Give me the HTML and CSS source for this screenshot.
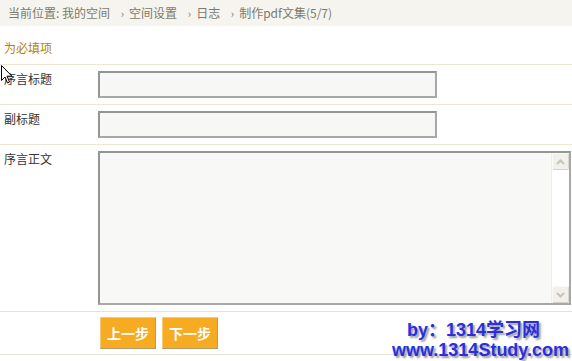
FILE: index.html
```html
<!DOCTYPE html>
<html lang="zh-CN">
<head>
    <meta charset="UTF-8">
    <title>制作pdf文集</title>
    <link rel="stylesheet" href="styles.css">
</head>
<body>
    <div class="breadcrumb">
        当前位置: <a href="#">我的空间</a>
        <span class="sep">›</span><a href="#">空间设置</a>
        <span class="sep">›</span><a href="#">日志</a>
        <span class="sep">›</span>制作pdf文集(5/7)
    </div>

    <p class="required">为必填项</p>

    <form class="pdf-form">
        <div class="row">
            <label for="title">序言标题</label>
            <input type="text" id="title" class="field">
        </div>
        <div class="row">
            <label for="subtitle">副标题</label>
            <input type="text" id="subtitle" class="field">
        </div>
        <div class="row">
            <label for="body">序言正文</label>
            <div class="textbox">
                <textarea id="body"></textarea>
                <div class="scrollbar">
                    <span class="sb-btn">
                        <svg width="9" height="6" viewBox="0 0 9 6"><path d="M1 5 L4.5 1.5 L8 5" fill="none" stroke="#c4c4bc" stroke-width="2"/></svg>
                    </span>
                    <span class="sb-track"></span>
                    <span class="sb-btn">
                        <svg width="9" height="6" viewBox="0 0 9 6"><path d="M1 1 L4.5 4.5 L8 1" fill="none" stroke="#c4c4bc" stroke-width="2"/></svg>
                    </span>
                </div>
            </div>
        </div>
        <div class="row actions">
            <button type="button" class="btn">上一步</button>
            <button type="button" class="btn">下一步</button>
        </div>
    </form>

    <div class="watermark">
        <div class="wm-by">by：1314学习网</div>
        <div>www.1314Study.com</div>
    </div>

    <svg class="cursor" width="12" height="19" viewBox="0 0 12 19">
        <path d="M0.5 0.5 L0.5 15.5 L4 12 L6.5 18 L8.5 17 L6 11.2 L11 11.2 Z" fill="#fff" stroke="#000" stroke-width="1"/>
    </svg>
</body>
</html>
```

FILE: styles.css
```css
body {
    margin: 0;
    font-family: "Noto Sans CJK SC", "DejaVu Sans", sans-serif;
    font-size: 12px;
    color: #333;
    background: #fff;
    position: relative;
    width: 572px;
    height: 361px;
    overflow: hidden;
}

.breadcrumb {
    height: 26px;
    line-height: 26px;
    padding-left: 8px;
    background-color: #f5f4ef;
    color: #7c7b6c;
}

.breadcrumb a {
    color: #7c7b6c;
    text-decoration: none;
}

.sep {
    font-size: 11px;
    margin: 0 5px 0 8px;
}

.required {
    margin: 0;
    padding: 14px 0 0 4px;
    height: 24px;
    line-height: 16px;
    color: #b08300;
}

.row {
    display: flex;
    align-items: flex-start;
    border-top: 1px solid #ede6d2;
    padding: 6px 0;
}

.row label {
    width: 94px;
    padding: 1px 0 0 4px;
    line-height: 14px;
}

.field {
    width: 339px;
    height: 27px;
    margin: 0;
    padding: 0 4px;
    box-sizing: border-box;
    border: 2px solid;
    border-color: #959595 #a8a8a8 #a8a8a8 #959595;
    background-color: #f7f7f5;
    font: inherit;
}

.textbox {
    display: flex;
    width: 473px;
    height: 154px;
    box-sizing: border-box;
    border: 2px solid;
    border-color: #959595 #a8a8a8 #a8a8a8 #959595;
    background-color: #f8f8f6;
}

.textbox textarea {
    flex: 1;
    border: none;
    resize: none;
    background: transparent;
    margin: 0;
    padding: 2px 4px;
    font: inherit;
    outline: none;
}

.scrollbar {
    width: 17px;
    display: flex;
    flex-direction: column;
    background-color: #fff;
    border-left: 1px solid #eeeee8;
}

.sb-btn {
    height: 17px;
    display: flex;
    align-items: center;
    justify-content: center;
    box-sizing: border-box;
    background-color: #f1f0ea;
    border: 1px solid;
    border-color: #fafaf6 #d9d7cc #d4d2c6 #fafaf6;
    border-radius: 2px;
}

.sb-track {
    flex: 1;
}

.actions {
    border-top-color: #e4e2db;
    border-bottom: 1px solid #e4e2db;
    padding: 5px 0 5px 100px;
    gap: 6px;
}

.btn {
    width: 56px;
    height: 32px;
    margin: 0;
    padding: 0;
    background-color: #f7ab22;
    color: #fff;
    font: bold 14px "Noto Sans CJK SC", sans-serif;
    border: 1px solid;
    border-color: #f9c873 #b39a6a #b39a6a #f9c873;
    cursor: pointer;
}

.watermark {
    position: absolute;
    left: 392px;
    top: 320px;
    font: bold 18px "Liberation Sans", "Noto Sans CJK SC", sans-serif;
    line-height: 20px;
    color: #2a2ee0;
    text-shadow: 2px 2px 2px #9a9a9a;
}

.wm-by {
    padding-left: 15px;
}

.cursor {
    position: absolute;
    left: 1px;
    top: 65px;
}
```
